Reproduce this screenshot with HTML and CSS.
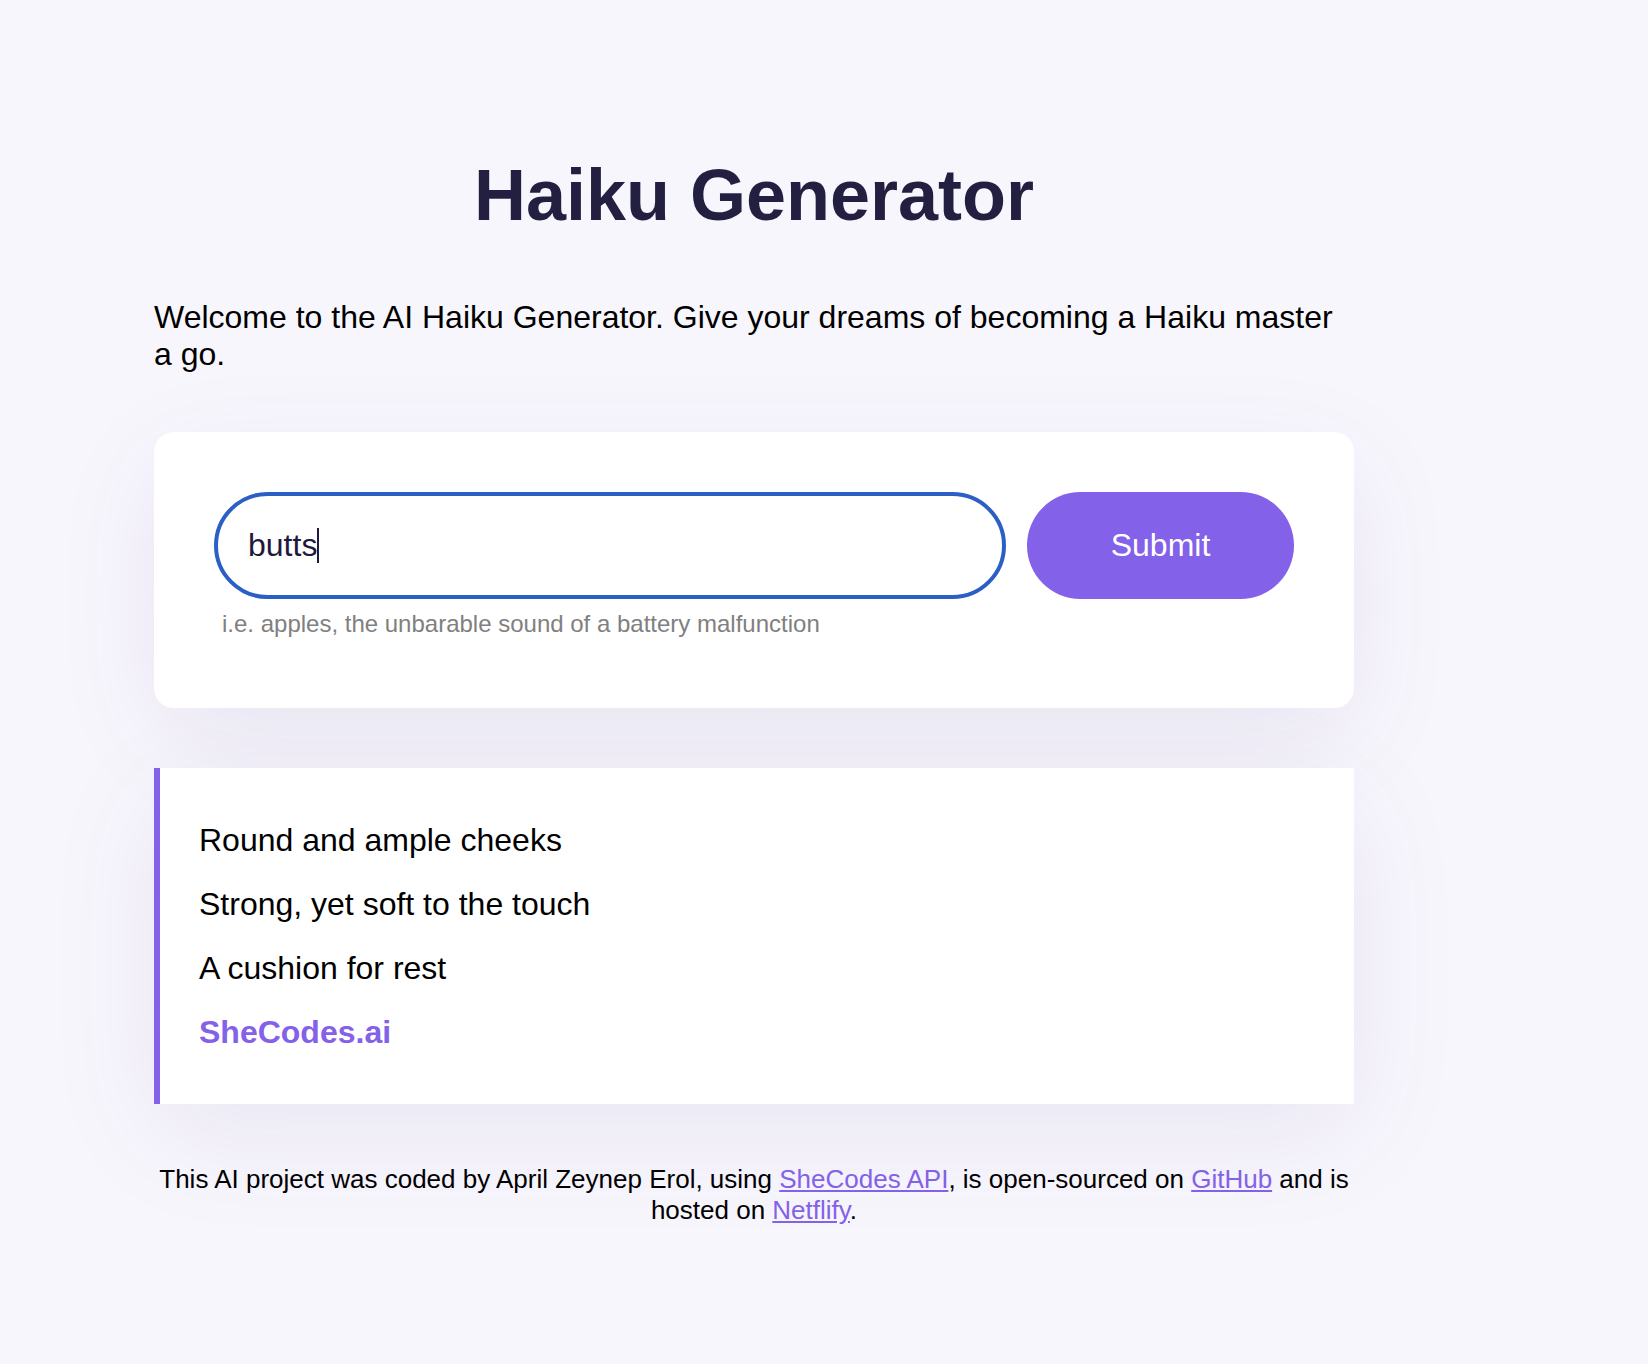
FILE: index.html
```html
<!DOCTYPE html>
<html lang="en">
<head>
<meta charset="utf-8">
<title>Haiku Generator</title>
<link rel="stylesheet" href="styles.css">
</head>
<body>
<div class="container">
  <header class="header">
    <h1 class="title">Haiku Generator</h1>
  </header>
  <p class="intro">Welcome to the AI Haiku Generator. Give your dreams of becoming a Haiku master a go.</p>
  <section class="form-card">
    <form class="haiku-form">
      <div class="field">
        <div class="text-input"><span class="value">butts</span><span class="caret"></span></div>
        <small class="hint">i.e. apples, the unbarable sound of a battery malfunction</small>
      </div>
      <button type="button" class="submit">Submit</button>
    </form>
  </section>
  <section class="haiku">
    <div class="line">Round and ample cheeks</div>
    <div class="line">Strong, yet soft to the touch</div>
    <div class="line">A cushion for rest</div>
    <div class="line"><strong class="signature">SheCodes.ai</strong></div>
  </section>
  <footer class="footer">
    This AI project was coded by April Zeynep Erol, using <a href="#" class="link">SheCodes API</a>, is open-sourced on <a href="#" class="link">GitHub</a> and is hosted on <a href="#" class="link">Netflify</a>.
  </footer>
</div>
</body>
</html>
```

FILE: styles.css
```css
html, body {
  margin: 0;
  padding: 0;
}

body {
  background: #f8f6fd;
  font-family: "Liberation Sans", Arial, Helvetica, sans-serif;
  color: #000;
}

.container {
  width: 1200px;
  margin-left: 154px;
  padding-top: 154px;
  display: flex;
  flex-direction: column;
  gap: 60px;
}

.header {
  text-align: center;
  padding-bottom: 2px;
}

.title {
  margin: 0;
  font-size: 72px;
  font-weight: 700;
  line-height: 1.15;
  color: #231f41;
}

.intro {
  margin: 0;
  font-size: 32px;
  line-height: 1.15;
}

.form-card {
  background: #ffffff;
  border-radius: 20px;
  padding: 60px;
  box-shadow: 0 30px 110px rgba(40, 30, 90, 0.075);
}

.haiku-form {
  display: grid;
  grid-template-columns: 1fr 267px;
  column-gap: 21px;
  align-items: start;
}

.field {
  display: flex;
  flex-direction: column;
}

.text-input {
  box-sizing: border-box;
  height: 107px;
  border: 4px solid #2b5fc6;
  border-radius: 60px;
  padding: 0 30px;
  display: flex;
  align-items: center;
  font-size: 32px;
  color: #1f1a3d;
  background: #fff;
}

.caret {
  display: inline-block;
  width: 1.5px;
  height: 35px;
  background: #1f1a3d;
}

.hint {
  margin: 11px 0 10px 8px;
  font-size: 24px;
  line-height: 1.15;
  color: #808080;
}

.submit {
  box-sizing: border-box;
  height: 107px;
  border: none;
  border-radius: 60px;
  background: #8361e8;
  color: #ffffff;
  font-family: "Liberation Sans", Arial, Helvetica, sans-serif;
  font-size: 32px;
  padding: 0;
}

.haiku {
  background: #ffffff;
  border-left: 6px solid #8361e8;
  padding: 40px 40px 40px 39px;
  box-shadow: 0 30px 110px rgba(40, 30, 90, 0.075);
}

.line {
  font-size: 32px;
  line-height: 2;
}

.signature {
  color: #8361e8;
  font-weight: 700;
}

.footer {
  text-align: center;
  font-size: 26px;
  line-height: 1.2;
  padding-bottom: 100px;
}

.link {
  color: #8361e8;
  text-decoration: underline;
}
```
